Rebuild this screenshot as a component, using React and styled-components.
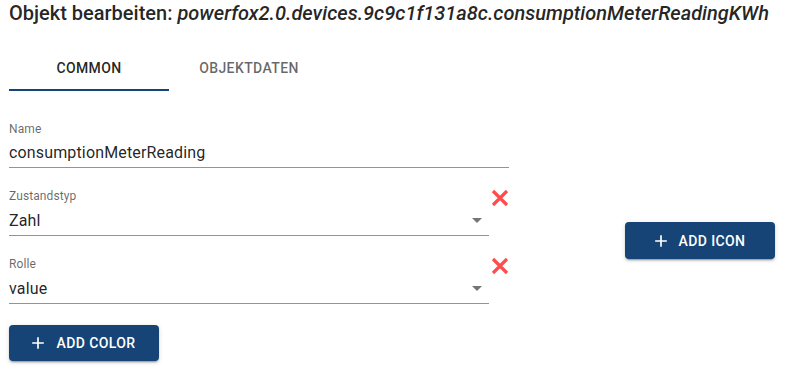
import React from "react";
import styled, { createGlobalStyle } from "styled-components";

const PRIMARY = "#164477";

const GlobalStyle = createGlobalStyle`
  html, body {
    margin: 0;
    padding: 0;
    background: #fff;
  }
  body {
    font-family: Roboto, "Noto Sans", Arial, sans-serif;
    color: rgba(0, 0, 0, 0.87);
  }
`;

const Page = styled.div`
  padding: 1px 0 0 9px;
  width: 812px;
  height: 371px;
  box-sizing: border-box;
  overflow: hidden;
`;

const Title = styled.h1`
  margin: 0;
  font-size: 20px;
  font-weight: 500;
  line-height: 24px;
  white-space: nowrap;
`;

const ObjectId = styled.span`
  font-style: italic;
`;

const TabBar = styled.div`
  display: flex;
  margin-top: 21px;
`;

const Tab = styled.button`
  width: 160px;
  padding: 12px 16px 11px;
  border: none;
  border-bottom: 2px solid ${(p) => (p.$active ? PRIMARY : "transparent")};
  background: none;
  font-family: inherit;
  font-size: 14px;
  font-weight: 500;
  line-height: 20px;
  letter-spacing: 0.4px;
  text-transform: uppercase;
  color: ${(p) => (p.$active ? "rgba(0, 0, 0, 0.87)" : "rgba(0, 0, 0, 0.6)")};
  cursor: pointer;
`;

const Content = styled.div`
  display: flex;
  align-items: center;
  gap: 116px;
  margin-top: 30px;
`;

const LeftColumn = styled.div`
  display: flex;
  flex-direction: column;
  gap: 20px;
  width: 500px;
`;

const RightColumn = styled.div`
  display: flex;
  align-items: center;
  padding-bottom: 1px;
`;

const Row = styled.div`
  display: flex;
  align-items: flex-start;
  gap: 2px;
`;

const Field = styled.label`
  display: flex;
  flex-direction: column;
  width: ${(p) => p.$width}px;
`;

const FieldLabel = styled.span`
  font-size: 12px;
  line-height: 16px;
  letter-spacing: 0.1px;
  color: rgba(0, 0, 0, 0.6);
`;

const FieldValue = styled.div`
  display: flex;
  align-items: center;
  padding: 4px 0 3px;
  font-size: 16px;
  line-height: 23px;
  letter-spacing: 0.15px;
  color: rgba(0, 0, 0, 0.87);
  border-bottom: 1px solid rgba(0, 0, 0, 0.42);
`;

const Grow = styled.span`
  flex: 1;
`;

const DropIcon = styled.svg`
  width: 24px;
  height: 24px;
  fill: rgba(0, 0, 0, 0.54);
`;

const DeleteButton = styled.button`
  display: flex;
  padding: 0;
  margin-top: 1px;
  border: none;
  background: none;
  cursor: pointer;
`;

const ActionButton = styled.button`
  display: inline-flex;
  align-items: center;
  justify-content: center;
  width: 150px;
  height: ${(p) => p.$height || 36}px;
  margin-top: ${(p) => p.$offset || 0}px;
  padding: 0 16px;
  border: none;
  border-radius: 4px;
  background: ${PRIMARY};
  color: #fff;
  font-family: inherit;
  font-size: 14px;
  font-weight: 500;
  line-height: 24px;
  letter-spacing: 0.4px;
  text-transform: uppercase;
  box-shadow: 0px 3px 1px -2px rgba(0, 0, 0, 0.2),
    0px 2px 2px 0px rgba(0, 0, 0, 0.14), 0px 1px 5px 0px rgba(0, 0, 0, 0.12);
  cursor: pointer;
  align-self: flex-start;
`;

const StartIcon = styled.svg`
  width: 20px;
  height: 20px;
  margin: 0 8px 0 -4px;
  fill: currentColor;
`;

const AddIcon = () => (
  <StartIcon viewBox="0 0 24 24">
    <path d="M19 13h-6v6h-2v-6H5v-2h6V5h2v6h6v2z" />
  </StartIcon>
);

const CloseIcon = () => (
  <svg width="18" height="18" viewBox="0 0 18 18">
    <path
      d="M2 2 L16 16 M16 2 L2 16"
      stroke="#ff4d4d"
      strokeWidth="3.2"
      fill="none"
    />
  </svg>
);

const SelectField = ({ label, value }) => (
  <Row>
    <Field $width={480}>
      <FieldLabel>{label}</FieldLabel>
      <FieldValue>
        <Grow>{value}</Grow>
        <DropIcon viewBox="0 0 24 24">
          <path d="M7 10l5 5 5-5z" />
        </DropIcon>
      </FieldValue>
    </Field>
    <DeleteButton aria-label="delete">
      <CloseIcon />
    </DeleteButton>
  </Row>
);

export default function App() {
  return (
    <>
      <GlobalStyle />
      <Page>
        <Title>
          Objekt bearbeiten:{" "}
          <ObjectId>powerfox2.0.devices.9c9c1f131a8c.consumptionMeterReadingKWh</ObjectId>
        </Title>
        <TabBar>
          <Tab $active>Common</Tab>
          <Tab>Objektdaten</Tab>
        </TabBar>
        <Content>
          <LeftColumn>
            <Field $width={500}>
              <FieldLabel>Name</FieldLabel>
              <FieldValue>consumptionMeterReading</FieldValue>
            </Field>
            <SelectField label="Zustandstyp" value="Zahl" />
            <SelectField label="Rolle" value="value" />
            <ActionButton $offset={1}>
              <AddIcon />
              Add color
            </ActionButton>
          </LeftColumn>
          <RightColumn>
            <ActionButton $height={37}>
              <AddIcon />
              Add icon
            </ActionButton>
          </RightColumn>
        </Content>
      </Page>
    </>
  );
}
